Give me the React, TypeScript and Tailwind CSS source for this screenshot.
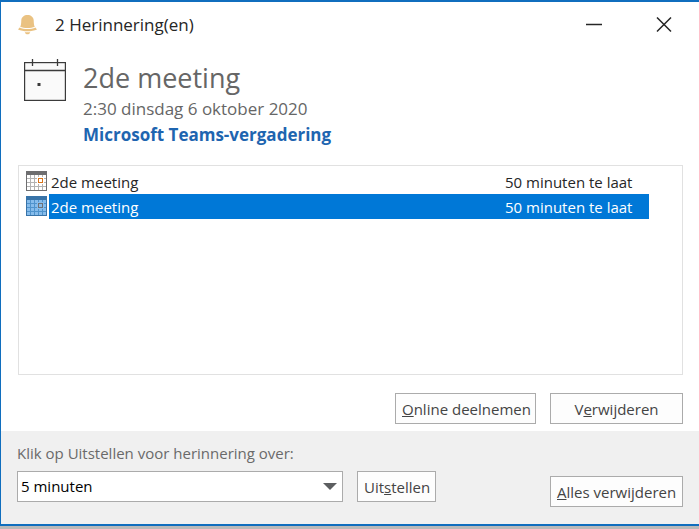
import { useState } from "react";

const REMINDERS = [
  { id: 1, subject: "2de meeting", due: "50 minuten te laat" },
  { id: 2, subject: "2de meeting", due: "50 minuten te laat" },
];

const SNOOZE_OPTIONS = ["5 minuten", "10 minuten", "15 minuten", "30 minuten", "1 uur"];

const buttonClass =
  "h-[31px] border border-[#ababab] bg-[#fdfdfd] px-1.5 text-[15px] leading-5 whitespace-nowrap text-[#444444]";

function BellIcon() {
  return (
    <svg width="19" height="20" viewBox="0 0 19 20" fill="#eac282" aria-hidden="true">
      <path d="M9.5 0C12.8 0 15.5 2 15.7 5.2C15.8 8.6 16 10.4 16.8 11.8C13 13.4 6 13.4 2.2 11.8C3 10.4 3.2 8.6 3.3 5.2C3.5 2 6.2 0 9.5 0Z" />
      <path d="M1.6 12.6C6 14.6 13 14.6 17.4 12.6L19 14.4C14 16.8 5 16.8 0 14.4Z" />
      <path d="M6.8 17.2H12.2C11.8 18.6 10.8 19.3 9.5 19.3C8.2 19.3 7.2 18.6 6.8 17.2Z" />
    </svg>
  );
}

function AppointmentIcon() {
  return (
    <svg width="42" height="42" viewBox="0 0 42 42" fill="none" aria-hidden="true">
      <rect x="0.6" y="3.6" width="40.8" height="37.8" fill="#fafafa" stroke="#3b3b3b" strokeWidth="1.2" />
      <path d="M0 11.5H42M8.5 0V7M33.5 0V7" stroke="#3b3b3b" strokeWidth="1.3" />
      <rect x="13.5" y="24" width="3" height="3" fill="#3b3b3b" />
    </svg>
  );
}

function CalendarIcon({ selected }: { selected: boolean }) {
  const frame = selected ? "#3873a8" : "#6e6e70";
  const grid = selected ? "#4f93cc" : "#b3b3b3";
  const paper = selected ? "#86bceb" : "#ffffff";
  const day = selected ? "#6e7277" : "#d9731a";
  return (
    <svg width="21" height="20" viewBox="0 0 21 20" fill="none" aria-hidden="true">
      <rect x="0.5" y="0.5" width="20" height="19" fill={paper} stroke={frame} />
      <rect width="21" height="4" fill={frame} />
      <path d="M1 7.5H20M1 11.5H20M1 15.5H20M4.5 4V19M8.5 4V19M12.5 4V19M16.5 4V19" stroke={grid} />
      <rect x="11" y="6" width="7" height="7" fill={paper} />
      <rect x="12.5" y="7.5" width="4" height="4" stroke={day} />
    </svg>
  );
}

export default function App() {
  const [selectedId, setSelectedId] = useState(2);
  const [snooze, setSnooze] = useState(SNOOZE_OPTIONS[0]);

  return (
    <div className="flex min-h-screen flex-col bg-[#b9b9b9] pb-[3px] font-['Open_Sans','Noto_Sans',sans-serif]">
      <div className="flex flex-1 flex-col border-t-2 border-b-2 border-l border-[#106ebe] bg-white">
        <header className="flex h-[45px] items-center pr-[27px] pl-[17px]">
          <BellIcon />
          <h1 className="flex-1 pl-[18px] text-[17px] leading-6 text-[#262626]">2 Herinnering(en)</h1>
          <button type="button" aria-label="Minimaliseren" className="mr-[54px]">
            <svg width="16" height="16" viewBox="0 0 16 16" fill="none" aria-hidden="true">
              <path d="M0 7.5H16" stroke="#262626" strokeWidth="1.5" />
            </svg>
          </button>
          <button type="button" aria-label="Sluiten">
            <svg width="16" height="16" viewBox="0 0 16 16" fill="none" aria-hidden="true">
              <path d="M1 0.5L15 14.5M15 0.5L1 14.5" stroke="#262626" strokeWidth="1.5" />
            </svg>
          </button>
        </header>

        <section className="flex px-[23px] pt-3">
          <AppointmentIcon />
          <div className="pt-px pl-[17px]">
            <h2 className="text-[27px] leading-9 text-[#666666]">2de meeting</h2>
            <p className="text-[17px] leading-[26px] text-[#666666]">2:30 dinsdag 6 oktober 2020</p>
            <p className="text-[17px] leading-[26px] font-bold text-[#1e65b0]">Microsoft Teams-vergadering</p>
          </div>
        </section>

        <div className="mx-4 mt-[17px] ml-[17px] flex-1 border border-[#e1e1e1] pt-[3px] pr-[33px] pl-[7px]">
          <table className="w-full border-collapse text-[15px] leading-5">
            <tbody>
              {REMINDERS.map((item) => {
                const selected = item.id === selectedId;
                return (
                  <tr
                    key={item.id}
                    onClick={() => setSelectedId(item.id)}
                    className={selected ? "h-[25px] text-white" : "h-[25px] text-[#262626]"}
                  >
                    <td className="w-[23px] p-0 pb-px">
                      <CalendarIcon selected={selected} />
                    </td>
                    <td className={selected ? "bg-[#0078d7] p-0 pl-0.5" : "p-0 pl-0.5"}>{item.subject}</td>
                    <td className={selected ? "w-36 bg-[#0078d7] p-0" : "w-36 p-0"}>{item.due}</td>
                  </tr>
                );
              })}
            </tbody>
          </table>
        </div>

        <div className="flex justify-end gap-3.5 pt-[18px] pr-4 pb-[7px]">
          <button type="button" className={`${buttonClass} w-[141px]`}>
            <u>O</u>nline deelnemen
          </button>
          <button type="button" className={`${buttonClass} w-[133px]`}>
            V<u>e</u>rwijderen
          </button>
        </div>

        <footer className="flex items-end justify-between bg-[#f0f0f0] pt-2.5 pr-4 pb-[17px] pl-4">
          <div className="pb-[5px]">
            <label htmlFor="snooze" className="block pb-1.5 text-[15px] leading-6 text-[#6a6a6a]">
              Klik op Uitstellen voor herinnering over:
            </label>
            <div className="flex gap-3.5">
              <div className="relative w-[326px]">
                <select
                  id="snooze"
                  value={snooze}
                  onChange={(e) => setSnooze(e.target.value)}
                  className="h-[31px] w-full appearance-none border border-[#ababab] bg-white pb-0.5 pl-[3px] text-[15px] leading-5 text-black"
                >
                  {SNOOZE_OPTIONS.map((option) => (
                    <option key={option}>{option}</option>
                  ))}
                </select>
                <svg
                  className="pointer-events-none absolute top-3 right-1.5"
                  width="14"
                  height="7"
                  viewBox="0 0 14 7"
                  fill="#5c5e60"
                  aria-hidden="true"
                >
                  <path d="M0 0H14L7 7Z" />
                </svg>
              </div>
              <button type="button" className={`${buttonClass} w-[79px]`}>
                Uit<u>s</u>tellen
              </button>
            </div>
          </div>
          <button type="button" className={`${buttonClass} w-[133px]`}>
            <u>A</u>lles verwijderen
          </button>
        </footer>
      </div>
    </div>
  );
}
